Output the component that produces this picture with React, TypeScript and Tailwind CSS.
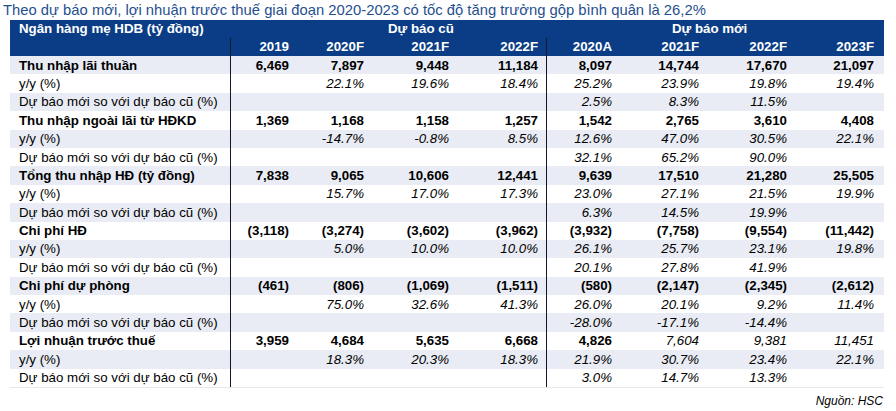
import React from 'react'

type Row = {
    label: string
    bold?: boolean
    old: string[]
    fresh: string[]
    freshBold?: boolean[]
}

const rows: Row[] = [
    { label: 'Thu nhập lãi thuần', bold: true, old: ['6,469', '7,897', '9,448', '11,184'], fresh: ['8,097', '14,744', '17,670', '21,097'] },
    { label: 'y/y (%)', old: ['', '22.1%', '19.6%', '18.4%'], fresh: ['25.2%', '23.9%', '19.8%', '19.4%'] },
    { label: 'Dự báo mới so với dự báo cũ (%)', old: ['', '', '', ''], fresh: ['2.5%', '8.3%', '11.5%', ''] },
    { label: 'Thu nhập ngoài lãi từ HĐKD', bold: true, old: ['1,369', '1,168', '1,158', '1,257'], fresh: ['1,542', '2,765', '3,610', '4,408'] },
    { label: 'y/y (%)', old: ['', '-14.7%', '-0.8%', '8.5%'], fresh: ['12.6%', '47.0%', '30.5%', '22.1%'] },
    { label: 'Dự báo mới so với dự báo cũ (%)', old: ['', '', '', ''], fresh: ['32.1%', '65.2%', '90.0%', ''] },
    { label: 'Tổng thu nhập HĐ (tỷ đồng)', bold: true, old: ['7,838', '9,065', '10,606', '12,441'], fresh: ['9,639', '17,510', '21,280', '25,505'] },
    { label: 'y/y (%)', old: ['', '15.7%', '17.0%', '17.3%'], fresh: ['23.0%', '27.1%', '21.5%', '19.9%'] },
    { label: 'Dự báo mới so với dự báo cũ (%)', old: ['', '', '', ''], fresh: ['6.3%', '14.5%', '19.9%', ''] },
    { label: 'Chi phí HĐ', bold: true, old: ['(3,118)', '(3,274)', '(3,602)', '(3,962)'], fresh: ['(3,932)', '(7,758)', '(9,554)', '(11,442)'] },
    { label: 'y/y (%)', old: ['', '5.0%', '10.0%', '10.0%'], fresh: ['26.1%', '25.7%', '23.1%', '19.8%'] },
    { label: 'Dự báo mới so với dự báo cũ (%)', old: ['', '', '', ''], fresh: ['20.1%', '27.8%', '41.9%', ''] },
    { label: 'Chi phí dự phòng', bold: true, old: ['(461)', '(806)', '(1,069)', '(1,511)'], fresh: ['(580)', '(2,147)', '(2,345)', '(2,612)'] },
    { label: 'y/y (%)', old: ['', '75.0%', '32.6%', '41.3%'], fresh: ['26.0%', '20.1%', '9.2%', '11.4%'] },
    { label: 'Dự báo mới so với dự báo cũ (%)', old: ['', '', '', ''], fresh: ['-28.0%', '-17.1%', '-14.4%', ''] },
    { label: 'Lợi nhuận trước thuế', bold: true, old: ['3,959', '4,684', '5,635', '6,668'], fresh: ['4,826', '7,604', '9,381', '11,451'], freshBold: [true, false, false, false] },
    { label: 'y/y (%)', old: ['', '18.3%', '20.3%', '18.3%'], fresh: ['21.9%', '30.7%', '23.4%', '22.1%'] },
    { label: 'Dự báo mới so với dự báo cũ (%)', old: ['', '', '', ''], fresh: ['3.0%', '14.7%', '13.3%', ''] },
]

// column widths, right padding puts the numbers where the source has them
const oldCols = ['w-[62px] pr-1', 'w-[75px] pr-1', 'w-[85px] pr-1', 'w-[93px] pr-[8px]']
const newCols = ['w-[69px] pr-1', 'w-[87px] pr-1', 'w-[88px] pr-1', 'w-[93px] pr-[10px]']

function Cell({ value, cls, bold }: { value: string; cls: string; bold: boolean }) {
    return (
        <div className={`${cls} shrink-0 text-right ${bold ? 'font-bold' : 'italic'}`}>{value}</div>
    )
}

export default function App() {
    return (
        <div className="w-[896px] h-[411px] bg-white text-[13.3px] text-black" style={{ fontFamily: '"Liberation Sans", Arial, sans-serif' }}>
            <div className="pl-[3px] pt-[1px] h-[20px] text-[14.8px] leading-[18px] text-[#1f4f8f] whitespace-nowrap">
                Theo dự báo mới, lợi nhuận trước thuế giai đoạn 2020-2023 có tốc độ tăng trưởng gộp bình quân là 26,2%
            </div>

            <div className="ml-[10px] w-[874px]">
                {/* header */}
                <div className="bg-[#0b3d86] text-white font-bold">
                    <div className="flex h-[18px] items-center leading-none">
                        <div className="w-[221px] pl-[9px]">Ngân hàng mẹ HDB (tỷ đồng)</div>
                        <div className="w-[315px] pl-[157px]">Dự báo cũ</div>
                        <div className="w-[338px] pl-[126px]">Dự báo mới</div>
                    </div>
                    <div className="flex h-[18px] items-center leading-none">
                        <div className="w-[221px] self-stretch border-r border-[#111827]" />
                        <div className="flex self-stretch items-center border-r border-[#111827]">
                            {['2019', '2020F', '2021F', '2022F'].map((y, i) => (
                                <div key={y} className={`${oldCols[i]} text-right`}>{y}</div>
                            ))}
                        </div>
                        <div className="flex">
                            {['2020A', '2021F', '2022F', '2023F'].map((y, i) => (
                                <div key={y} className={`${newCols[i]} text-right`}>{y}</div>
                            ))}
                        </div>
                    </div>
                </div>

                {/* body */}
                <div className="border-b border-[#e5e7eb]">
                    {rows.map((r, idx) => (
                        <div key={idx} className={`flex h-[18.4px] items-center leading-none ${idx % 2 === 0 ? 'bg-[#e9ecf4]' : 'bg-white'}`}>
                            <div className={`w-[221px] shrink-0 self-stretch flex items-center pl-[9px] border-r border-[#111827] ${r.bold ? 'font-bold' : ''}`}>
                                {r.label}
                            </div>
                            <div className="flex self-stretch items-center border-r border-[#111827]">
                                {r.old.map((v, i) => (
                                    <Cell key={i} value={v} cls={oldCols[i]} bold={!!r.bold} />
                                ))}
                            </div>
                            <div className="flex items-center">
                                {r.fresh.map((v, i) => (
                                    <Cell key={i} value={v} cls={newCols[i]} bold={r.freshBold ? r.freshBold[i] : !!r.bold} />
                                ))}
                            </div>
                        </div>
                    ))}
                </div>

                <div className="text-right pr-[1px] pt-[7px] text-[12px] italic leading-none">Nguồn: HSC</div>
            </div>
        </div>
    )
}
